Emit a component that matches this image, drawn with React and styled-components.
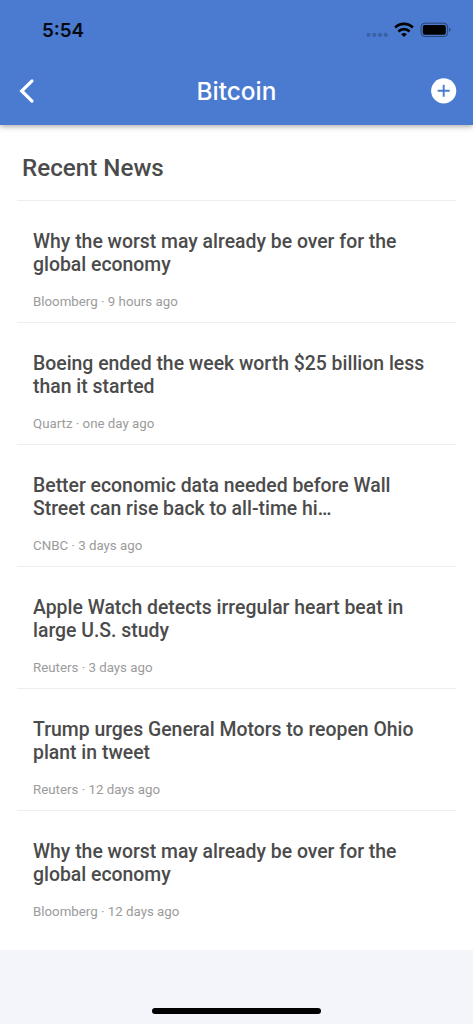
import React from "react";
import styled, { createGlobalStyle } from "styled-components";

const Global = createGlobalStyle`
  * { box-sizing: border-box; }
  body { margin: 0; background: #f3f5fa; font-family: Roboto, "Liberation Sans", sans-serif; }
  h1, h2, h3, p { margin: 0; padding: 0; font-weight: 500; }
`;
const Screen = styled.div`
  width: 473px; height: 1024px; display: flex; flex-direction: column; overflow: hidden;
`;
const Header = styled.header`
  height: 125px; flex: none; background: #4a7bd0; box-shadow: 0 1px 6px rgba(0,0,0,.4); z-index: 1; position: relative;
`;
const StatusBar = styled.div`
  height: 60px; display: flex; align-items: center; justify-content: space-between; padding: 0 22px 0 42px;
`;
const Time = styled.span`
  font: 600 18.8px/22px Inter, sans-serif; color: #050a12; padding-top: 2px;
`;
const StatusIcons = styled.svg`
  display: block;
`;
const NavBar = styled.nav`
  height: 62px; display: grid; grid-template-columns: 60px 1fr 60px; align-items: center;
`;
const Title = styled.h1`
  font-family: Inter, sans-serif; color: #fff; font-size: 24.4px; line-height: 28px; text-align: center;
`;
const NavButton = styled.button`
  border: 0; background: none; padding: 0; height: 30px; display: flex; align-items: center;
  justify-content: ${(p) => (p.$end ? "flex-end" : "flex-start")};
  padding-${(p) => (p.$end ? "right" : "left")}: 16px;
`;
const News = styled.main`
  height: 825px; flex: none; background: #fff; padding: 0 17px;
`;
const Heading = styled.h2`
  height: 75px; padding: 29px 5px 0; font-size: 24.2px; line-height: 28px; color: #4b4b4b;
`;
const Article = styled.article`
  height: 122px; border-top: 1px solid #eeeeee; padding: 29px 16px 0;
`;
const Headline = styled.h3`
  font-size: 19.4px; line-height: 23px; color: #4b4b4b; white-space: pre-line;
`;
const Meta = styled.p`
  margin-top: 18px; font-size: 13.3px; line-height: 16px; font-weight: 400; color: #9b9b9b;
`;
const Footer = styled.footer`
  flex: 1; display: flex; justify-content: center; align-items: flex-end; padding-bottom: 10px;
`;
const HomeIndicator = styled.div`
  width: 169px; height: 6px; border-radius: 3px; background: #000;
`;

const articles = [
  ["Why the worst may already be over for the\nglobal economy", "Bloomberg · 9 hours ago"],
  ["Boeing ended the week worth $25 billion less\nthan it started", "Quartz · one day ago"],
  ["Better economic data needed before Wall\nStreet can rise back to all-time hi…", "CNBC · 3 days ago"],
  ["Apple Watch detects irregular heart beat in\nlarge U.S. study", "Reuters · 3 days ago"],
  ["Trump urges General Motors to reopen Ohio\nplant in tweet", "Reuters · 12 days ago"],
  ["Why the worst may already be over for the\nglobal economy", "Bloomberg · 12 days ago"],
];

export default function App() {
  return (
    <Screen>
      <Global />
      <Header>
        <StatusBar>
          <Time>5:54</Time>
          <StatusIcons width="86" height="20" viewBox="0 0 86 20">
            <g fill="#000" fillOpacity=".21">
              <rect x="1.700" y="13" width="3.800" height="3.800" rx="1.200" />
              <rect x="7.400" y="13" width="3.800" height="3.800" rx="1.200" />
              <rect x="13.100" y="13" width="3.800" height="3.800" rx="1.200" />
              <rect x="18.800" y="13" width="3.800" height="3.800" rx="1.200" />
            </g>
            <g fill="none" stroke="#000" strokeWidth="2.800">
              <path d="M30.200 7.400a12.700 12.700 0 0 1 17.600 0" />
              <path d="M33.400 11.400a8.100 8.100 0 0 1 11.200 0" />
            </g>
            <path d="M36.200 14.300a4 4 0 0 1 5.600 0L39 17z" />
            <rect x="56" y="3.200" width="26.600" height="13.300" rx="3.800" fill="none" stroke="#000" strokeOpacity=".45" />
            <rect x="57.800" y="5" width="23" height="9.700" rx="2" />
            <path d="M84.100 7.600v4.500q1.500-.8 1.500-2.250t-1.500-2.250z" fillOpacity=".4" />
          </StatusIcons>
        </StatusBar>
        <NavBar>
          <NavButton aria-label="Back">
            <svg width="24" height="26" viewBox="0 0 24 26"><path d="M16 2.900 5.700 13 16 23.100" fill="none" stroke="#fff" strokeWidth="3.200" strokeLinecap="round" /></svg>
          </NavButton>
          <Title>Bitcoin</Title>
          <NavButton $end aria-label="Add">
            <svg width="26" height="26" viewBox="0 0 26 26"><circle cx="12.700" cy="12.800" r="12.600" fill="#fff" /><path d="M12.700 6.800v12M6.700 12.800h12" stroke="#4a7bd0" strokeWidth="1.900" /></svg>
          </NavButton>
        </NavBar>
      </Header>
      <News>
        <Heading>Recent News</Heading>
        {articles.map(([title, meta], i) => (
          <Article key={i}><Headline>{title}</Headline><Meta>{meta}</Meta></Article>
        ))}
      </News>
      <Footer><HomeIndicator /></Footer>
    </Screen>
  );
}
